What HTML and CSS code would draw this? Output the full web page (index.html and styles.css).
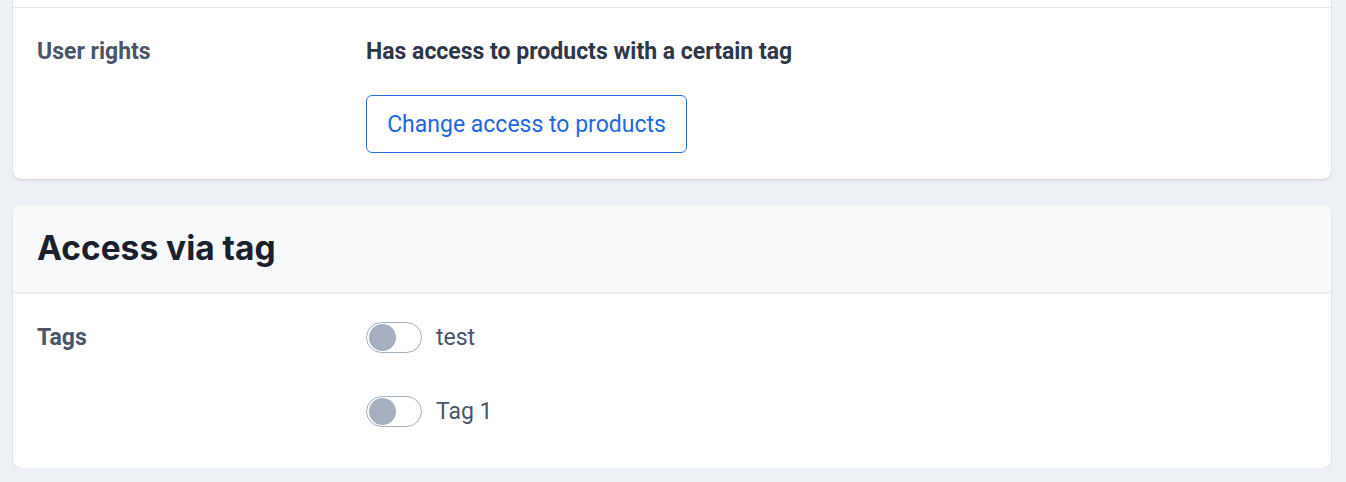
FILE: index.html
```html
<!DOCTYPE html>
<html lang="en">
<head>
<meta charset="utf-8">
<title>Access</title>
<link rel="stylesheet" href="styles.css">
</head>
<body>
<main class="page">
  <section class="card card-cut">
    <div class="prev-row"></div>
    <div class="row row-rights">
      <div class="label">User rights</div>
      <div class="value">
        <div class="rights-text">Has access to products with a certain tag</div>
        <button class="btn-outline" type="button">Change access to products</button>
      </div>
    </div>
  </section>

  <section class="card">
    <header class="card-header">
      <h2 class="card-title">Access via tag</h2>
    </header>
    <div class="row row-tags">
      <div class="label">Tags</div>
      <div class="value tag-list">
        <label class="toggle-item">
          <span class="toggle"><span class="knob"></span></span>
          <span class="toggle-text">test</span>
        </label>
        <label class="toggle-item">
          <span class="toggle"><span class="knob"></span></span>
          <span class="toggle-text">Tag 1</span>
        </label>
      </div>
    </div>
  </section>
</main>
</body>
</html>
```

FILE: styles.css
```css
* { box-sizing: border-box; }

html, body {
  margin: 0;
  padding: 0;
  background: #edf0f4;
}

body {
  font-family: Roboto, "Liberation Sans", Arial, sans-serif;
  color: #2d3748;
  overflow: hidden;
}

.page {
  display: flex;
  flex-direction: column;
  gap: 26px;
  padding: 0 15px 0 13px;
}

.card {
  background: #ffffff;
  border-radius: 8px;
  box-shadow: 0 1px 3px rgba(30, 41, 59, 0.10), 0 1px 2px rgba(30, 41, 59, 0.06);
  overflow: hidden;
}

.card-cut {
  margin-top: -20px;
}

.prev-row {
  height: 28px;
  border-bottom: 1px solid #e5e7eb;
}

.row {
  display: grid;
  grid-template-columns: 329px 1fr;
  padding: 0 24px;
}

.row-rights {
  padding-top: 29px;
  padding-bottom: 26px;
}

.label {
  font-size: 23px;
  font-weight: 700;
  line-height: 30px;
  color: #4a5568;
}

.rights-text {
  font-size: 23px;
  font-weight: 700;
  line-height: 30px;
  color: #2d3748;
  margin-bottom: 28px;
}

.btn-outline {
  display: block;
  height: 58px;
  width: 321px;
  padding: 0 20px;
  border: 1px solid #2b6ee8;
  border-radius: 6px;
  background: #ffffff;
  color: #1f66e5;
  font-family: Roboto, "Liberation Sans", Arial, sans-serif;
  font-size: 23px;
  font-weight: 400;
  text-align: center;
  cursor: pointer;
}

.card-header {
  background: #f8f9fb;
  height: 89px;
  border-bottom: 2px solid #eeeff1;
  display: flex;
  align-items: center;
  padding: 0 24px 2px;
}

.card-title {
  margin: 0;
  font-family: Inter, "Noto Sans", sans-serif;
  font-size: 33.5px;
  font-weight: 700;
  letter-spacing: 0;
  color: #1a202c;
}

.row-tags {
  padding-top: 28px;
  padding-bottom: 41px;
}

.row-tags .label {
  line-height: 31px;
}

.tag-list {
  display: flex;
  flex-direction: column;
  gap: 43px;
}

.toggle-item {
  display: flex;
  align-items: center;
  gap: 14px;
  height: 31px;
}

.toggle {
  width: 56px;
  height: 31px;
  border: 1px solid #a0aec0;
  border-radius: 16px;
  background: #ffffff;
  display: flex;
  align-items: center;
  padding-left: 2px;
}

.knob {
  width: 27px;
  height: 27px;
  border-radius: 50%;
  background: #a5afbf;
}

.toggle-text {
  font-size: 23px;
  color: #4a5568;
  line-height: 31px;
}
```
